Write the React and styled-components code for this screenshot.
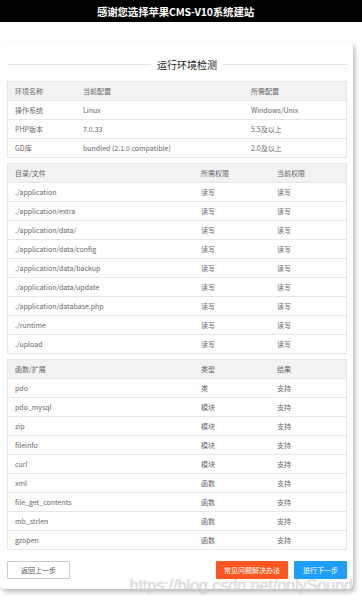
import React from 'react';
import styled, { createGlobalStyle } from 'styled-components';

const GlobalStyle = createGlobalStyle`
  html, body {
    margin: 0;
    padding: 0;
    background: #fff;
    font-family: "Noto Sans CJK SC", "Liberation Sans", sans-serif;
  }
`

const TopBar = styled.div`
  height: 22px;
  background: #000;
  color: #fff;
  font-size: 10.5px;
  font-weight: bold;
  display: flex;
  align-items: center;
  justify-content: center;
  padding-right: 11px;
  letter-spacing: -0.2px;
`

const Page = styled.div`
  padding-top: 20px;
  padding-bottom: 20px;
`

const Card = styled.div`
  position: relative;
  width: 353px;
  box-sizing: border-box;
  background: #fff;
  border-radius: 5px;
  box-shadow: 2px 3px 5px rgba(0, 0, 0, 0.28);
  padding: 14px 6px 10px 7px;
`

const Heading = styled.div`
  display: flex;
  align-items: center;
  gap: 6px;
  height: 16px;
  margin-bottom: 9px;
  font-size: 10px;
  color: #222;

  &::before, &::after {
    content: "";
    height: 1px;
    background: #e2e2e2;
  }
  &::before {
    width: 144px;
  }
  &::after {
    flex: 1;
  }
`

const Table = styled.div`
  display: grid;
  grid-template-columns: ${p => p.cols};
  border: 1px solid #e6e6e6;
  margin-bottom: 5px;
  font-size: 7px;
  color: #666;
`

const Cell = styled.div`
  height: 18px;
  display: flex;
  align-items: center;
  padding-left: 7px;
  border-top: ${p => (p.first ? 'none' : '1px solid #e6e6e6')};
  background: ${p => (p.head ? '#f2f2f2' : '#fff')};
  white-space: nowrap;
`

const Actions = styled.div`
  display: flex;
  align-items: center;
  gap: 6px;
  margin-top: 11px;
`

const Button = styled.div`
  height: 18px;
  box-sizing: border-box;
  padding: 0 ${p => p.pad}px;
  display: flex;
  align-items: center;
  font-size: 7px;
  color: ${p => (p.kind === 'plain' ? '#555' : '#fff')};
  background: ${p => ({ plain: '#fff', warn: '#ff5722', normal: '#1e9fff' }[p.kind])};
  border: ${p => (p.kind === 'plain' ? '1px solid #c9c9c9' : 'none')};
  border-radius: 1px;
`

const Spacer = styled.div`
  flex: 1;
`

const Watermark = styled.div`
  position: absolute;
  right: 0;
  bottom: -6px;
  font-family: "Liberation Sans", Arial, sans-serif;
  font-size: 16px;
  color: rgba(255, 255, 255, 0.55);
  text-shadow: 0 0 1px rgba(120, 120, 120, 0.6);
  pointer-events: none;
  white-space: nowrap;
`

const envRows = [
  ['环境名称', '当前配置', '所需配置'],
  ['操作系统', 'Linux', 'Windows/Unix'],
  ['PHP版本', '7.0.33', '5.5及以上'],
  ['GD库', 'bundled (2.1.0 compatible)', '2.0及以上'],
]

const dirRows = [
  ['目录/文件', '所需权限', '当前权限'],
  ['./application', '读写', '读写'],
  ['./application/extra', '读写', '读写'],
  ['./application/data/', '读写', '读写'],
  ['./application/data/config', '读写', '读写'],
  ['./application/data/backup', '读写', '读写'],
  ['./application/data/update', '读写', '读写'],
  ['./application/database.php', '读写', '读写'],
  ['./runtime', '读写', '读写'],
  ['./upload', '读写', '读写'],
]

const funcRows = [
  ['函数/扩展', '类型', '结果'],
  ['pdo', '类', '支持'],
  ['pdo_mysql', '模块', '支持'],
  ['zip', '模块', '支持'],
  ['fileinfo', '模块', '支持'],
  ['curl', '模块', '支持'],
  ['xml', '函数', '支持'],
  ['file_get_contents', '函数', '支持'],
  ['mb_strlen', '函数', '支持'],
  ['gzopen', '函数', '支持'],
]

function CheckTable({ rows, cols }) {
  return (
    <Table cols={cols}>
      {rows.map((row, i) =>
        row.map((text, j) => (
          <Cell key={i + '-' + j} head={i === 0} first={i === 0}>{text}</Cell>
        ))
      )}
    </Table>
  )
}

export default function App() {
  return (
    <>
      <GlobalStyle />
      <TopBar>感谢您选择苹果CMS-V10系统建站</TopBar>
      <Page>
        <Card>
          <Heading>运行环境检测</Heading>
          <CheckTable rows={envRows} cols="68px 168px 1fr" />
          <CheckTable rows={dirRows} cols="186px 76px 1fr" />
          <CheckTable rows={funcRows} cols="186px 76px 1fr" />
          <Actions>
            <Button kind="plain" pad={13}>返回上一步</Button>
            <Spacer />
            <Button kind="warn" pad={8}>常见问题解决办法</Button>
            <Button kind="normal" pad={9}>进行下一步</Button>
          </Actions>
          <Watermark>https://blog.csdn.net/onlySound</Watermark>
        </Card>
      </Page>
    </>
  )
}
